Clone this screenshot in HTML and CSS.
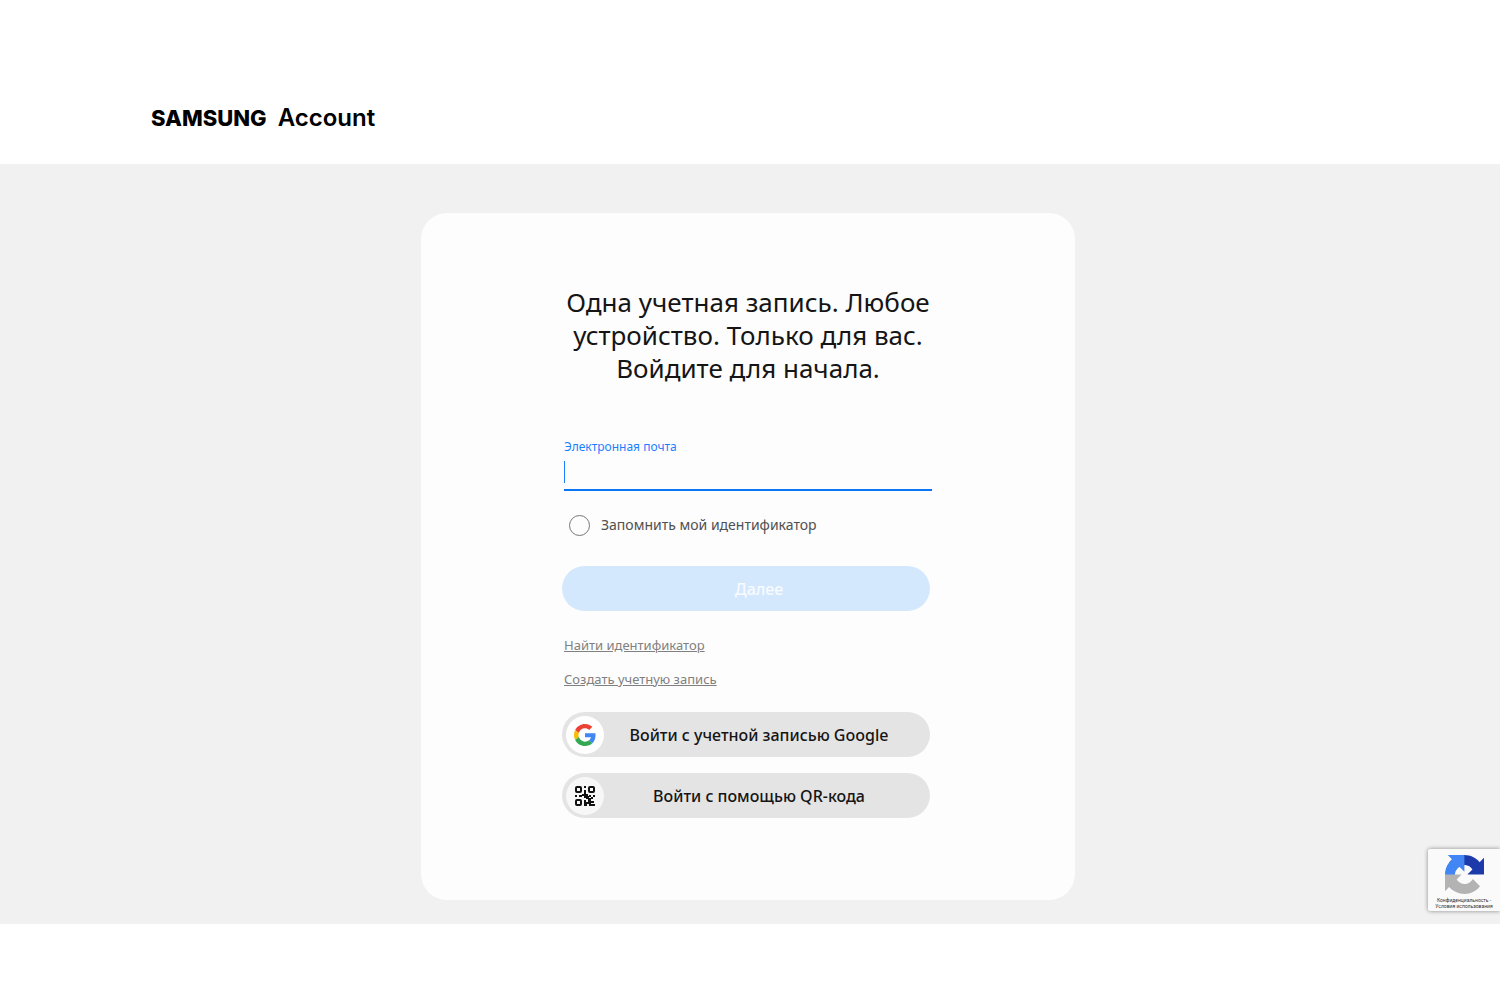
FILE: index.html
```html
<!DOCTYPE html>
<html lang="ru">
<head>
<meta charset="utf-8">
<meta name="viewport" content="width=device-width, initial-scale=1">
<title>Samsung Account</title>
<link rel="stylesheet" href="styles.css">
</head>
<body>
<header class="header">
  <a class="brand" href="#"><span class="brand-name">SAMSUNG</span><span class="brand-product">Account</span></a>
</header>
<main class="main">
  <section class="card">
    <h1 class="title">Одна учетная запись. Любое устройство. Только для вас. Войдите для начала.</h1>
    <form class="form">
      <label class="field-label" for="email">Электронная почта</label>
      <input class="field-input" id="email" type="email">
      <div class="remember">
        <input class="remember-box" id="remember" type="checkbox">
        <label class="remember-label" for="remember">Запомнить мой идентификатор</label>
      </div>
      <button class="button button-next" type="submit" disabled>Далее</button>
      <nav class="links">
        <a class="link" href="#">Найти идентификатор</a>
        <a class="link" href="#">Создать учетную запись</a>
      </nav>
      <div class="providers">
        <button class="button button-provider" type="button">
          <span class="provider-icon">
            <svg width="22" height="22" viewBox="0 0 48 48" aria-hidden="true">
              <path fill="#ea4335" d="M24 9.500c3.540 0 6.710 1.220 9.210 3.600l6.850-6.850C35.900 2.380 30.470 0 24 0 14.620 0 6.510 5.380 2.560 13.220l7.980 6.190C12.430 13.720 17.740 9.500 24 9.500z"/>
              <path fill="#4285f4" d="M46.980 24.550c0-1.570-.15-3.090-.38-4.550H24v9.020h12.940c-.58 2.960-2.260 5.480-4.780 7.180l7.730 6c4.510-4.180 7.090-10.360 7.090-17.650z"/>
              <path fill="#fbbc05" d="M10.530 28.590c-.48-1.450-.76-2.990-.76-4.590s.27-3.140.76-4.590l-7.980-6.190C.92 16.460 0 20.120 0 24s.92 7.540 2.560 10.780l7.970-6.190z"/>
              <path fill="#34a853" d="M24 48c6.480 0 11.930-2.130 15.890-5.810l-7.730-6c-2.150 1.450-4.920 2.300-8.160 2.300-6.260 0-11.570-4.220-13.470-9.910l-7.980 6.190C6.510 42.620 14.620 48 24 48z"/>
            </svg>
          </span>
          <span class="provider-text">Войти с учетной записью Google</span>
        </button>
        <button class="button button-provider" type="button">
          <span class="provider-icon provider-icon-soft">
            <svg width="20" height="20" viewBox="0 0 20 20" aria-hidden="true">
              <g fill="none" stroke="#111" stroke-width="2">
                <rect x="1" y="1" width="5" height="5" rx="1"/>
                <rect x="14" y="1" width="5" height="5" rx="1"/>
                <rect x="1" y="14" width="5" height="5" rx="1"/>
              </g>
              <path fill="#111" d="M9 0h2v2H9zM9 4h2v4h2v2h-2v2H9v-2H7V8h2zM0 9h2v2H0zM4 9h3v2H4zM14 9h2v2h-2zM18 9h2v2h-2zM11 10h3v2h2v-1h2v2h-2v2h3v2h-3v1h4v2h-6v-2h-2v2H9v-6h2v2h2v-3h-2z"/>
            </svg>
          </span>
          <span class="provider-text">Войти с помощью QR-кода</span>
        </button>
      </div>
    </form>
  </section>
  <aside class="captcha">
    <svg width="39" height="39" viewBox="0 0 64 64" aria-hidden="true">
      <path fill="#1c3aa9" d="M64 31.955l-.033-1.370V4.687l-7.160 7.160C50.948 4.674 42.033.093 32.050.093c-10.400 0-19.622 4.960-25.458 12.640l11.736 11.860a15.550 15.550 0 0 1 4.754-5.334c2.050-1.600 4.952-2.906 8.968-2.906.485 0 .86.057 1.135.163 4.976.393 9.288 3.140 11.828 7.124l-8.307 8.307L64 31.953"/>
      <path fill="#4285f4" d="M31.862.094l-1.370.033H4.594l7.160 7.160C4.580 13.147 0 22.060 0 32.046c0 10.400 4.960 19.622 12.640 25.458L24.500 45.768a15.550 15.550 0 0 1-5.334-4.754c-1.600-2.050-2.906-4.952-2.906-8.968 0-.485.057-.86.163-1.135.393-4.976 3.140-9.288 7.124-11.828l8.307 8.307L31.860.095"/>
      <path fill="#b3b3b3" d="M.001 32.045l.033 1.370v25.898l7.160-7.160c5.860 7.173 14.774 11.754 24.760 11.754 10.400 0 19.622-4.960 25.458-12.640l-11.736-11.860a15.550 15.550 0 0 1-4.754 5.334c-2.050 1.600-4.952 2.906-8.968 2.906-.485 0-.86-.057-1.135-.163-4.976-.393-9.288-3.140-11.828-7.124l8.307-8.307c-10.522.04-22.400.066-27.295-.005"/>
    </svg>
    <div class="captcha-links"><a href="#">Конфиденциальность</a> - <a href="#">Условия использования</a></div>
  </aside>
</main>
</body>
</html>
```
FILE: styles.css
```css
* {
  box-sizing: border-box;
}

body {
  margin: 0;
  background: #fff;
  color: #151515;
  font-family: "Noto Sans", "Open Sans", sans-serif;
}

.header {
  padding: 104px 10% 32px 151px;
}

.brand {
  display: inline-flex;
  align-items: center;
  gap: 11px;
  color: #000;
  font-family: Inter, "Liberation Sans", sans-serif;
  font-size: 22px;
  line-height: 28px;
  text-decoration: none;
}

.brand-name {
  font-weight: 800;
}

.brand-product {
  font-size: 24px;
  font-weight: 600;
}

.main {
  position: relative;
  padding: 49px 20px 24px 16px;
  background: #f1f1f1;
}

.card {
  max-width: 654px;
  margin: 0 auto;
  padding: 73px 20px 82px;
  border-radius: 26px;
  background: #fdfdfd;
}

.title {
  max-width: 370px;
  margin: 0 auto 52px;
  font-size: 26px;
  font-weight: 400;
  line-height: 33px;
  text-align: center;
}

.form {
  display: flex;
  flex-direction: column;
  max-width: 368px;
  margin: 0 auto;
}

.field-label {
  color: #1a80ff;
  font-size: 12px;
  line-height: 20px;
}

.field-input {
  width: 100%;
  height: 34px;
  padding: 4px 0;
  border: 0;
  border-bottom: 2px solid #0a75f5;
  border-radius: 0;
  outline: 0;
  background: linear-gradient(#1a80ff, #1a80ff) 0 4px / 1px 22px no-repeat;
  font: inherit;
  font-size: 16px;
}

.remember {
  display: flex;
  align-items: center;
  gap: 11px;
  margin: 23px 0 30px 5px;
}

.remember-box {
  appearance: none;
  width: 21px;
  height: 21px;
  margin: 0;
  border: 1px solid #777;
  border-radius: 50%;
}

.remember-label {
  color: #505050;
  font-size: 14px;
  line-height: 22px;
}

.button {
  width: 100%;
  height: 45px;
  border: 0;
  border-radius: 23px;
  font-family: inherit;
  font-size: 16px;
  font-weight: 500;
}

.button-next {
  margin-left: -2px;
  padding: 0 0 0 26px;
  background: #d4e8fd;
  color: #f8fbff;
}

.links {
  display: flex;
  flex-direction: column;
  align-items: flex-start;
  gap: 14px;
  margin: 24px 0 23px;
}

.link {
  color: #808080;
  font-size: 13px;
  line-height: 20px;
}

.providers {
  display: flex;
  flex-direction: column;
  gap: 16px;
  margin: 0 2px 0 -2px;
}

.button-provider {
  display: flex;
  align-items: center;
  padding: 0 16px 0 4px;
  background: #e4e4e4;
  color: #151515;
}

.provider-icon {
  display: flex;
  flex: none;
  align-items: center;
  justify-content: center;
  width: 38px;
  height: 38px;
  border-radius: 50%;
  background: #fff;
}

.provider-icon-soft {
  background: #f7f7f7;
}

.provider-text {
  flex: 1;
}

.captcha {
  position: absolute;
  right: 0;
  bottom: 13px;
  display: flex;
  flex-direction: column;
  align-items: center;
  width: 72px;
  padding: 6px 0 2px;
  border-radius: 2px 0 0 2px;
  background: #fafafa;
  box-shadow: 0 0 4px #888;
}

.captcha-links {
  margin-top: 3px;
  color: #333;
  font-family: Roboto, sans-serif;
  font-size: 5px;
  line-height: 6px;
  text-align: center;
}

.captcha-links a {
  color: inherit;
  text-decoration: none;
}
```
